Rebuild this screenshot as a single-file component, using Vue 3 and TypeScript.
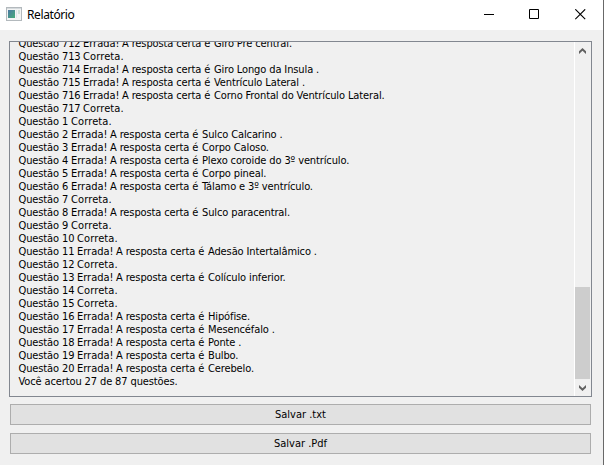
<script setup lang="ts">
interface Row {
  id: string
  answer?: string
}

const rows: Row[] = [
  { id: '712', answer: 'Giro Pre central.' },
  { id: '713' },
  { id: '714', answer: 'Giro Longo da Insula .' },
  { id: '715', answer: 'Ventrículo Lateral .' },
  { id: '716', answer: 'Corno Frontal do Ventrículo Lateral.' },
  { id: '717' },
  { id: '1' },
  { id: '2', answer: 'Sulco Calcarino .' },
  { id: '3', answer: 'Corpo Caloso.' },
  { id: '4', answer: 'Plexo coroide do 3º ventrículo.' },
  { id: '5', answer: 'Corpo pineal.' },
  { id: '6', answer: 'Tálamo e 3º ventrículo.' },
  { id: '7' },
  { id: '8', answer: 'Sulco paracentral.' },
  { id: '9' },
  { id: '10' },
  { id: '11', answer: 'Adesão Intertalâmico .' },
  { id: '12' },
  { id: '13', answer: 'Colículo inferior.' },
  { id: '14' },
  { id: '15' },
  { id: '16', answer: 'Hipófise.' },
  { id: '17', answer: 'Mesencéfalo .' },
  { id: '18', answer: 'Ponte .' },
  { id: '19', answer: 'Bulbo.' },
  { id: '20', answer: 'Cerebelo.' },
]
</script>

<template>
  <div class="window">
    <header class="titlebar">
      <svg class="app-icon" width="16" height="14" viewBox="0 0 16 14">
        <defs>
          <linearGradient id="pane" x1="0" y1="0" x2="1" y2="1">
            <stop offset="0" stop-color="#4c78a4" />
            <stop offset="1" stop-color="#45ad78" />
          </linearGradient>
        </defs>
        <rect x=".5" y=".5" width="15" height="13" fill="#f3f4f4" stroke="#b3b9bd" />
        <rect x="1" y="1" width="14" height="1" fill="#d5dadd" />
        <rect x="2" y="3" width="7" height="8" fill="url(#pane)" />
        <rect x="10" y="3" width="1" height="8" fill="#dfe6ea" />
        <rect x="12" y="3" width="2" height="4" fill="#cfe0d8" />
      </svg>
      <span class="title">Relatório</span>
      <div class="controls">
        <svg width="11" height="11" viewBox="0 0 11 11"><path d="M0 5.5H10" /></svg>
        <svg width="11" height="11" viewBox="0 0 11 11"><path d="M.5 .5H9.5V9.5H.5Z" /></svg>
        <svg class="close" width="11" height="11" viewBox="0 0 11 11"><path d="M.3 .3L10.2 10.2M10.2 .3L.3 10.2" /></svg>
      </div>
    </header>
    <main class="body">
      <div class="report">
        <div class="lines">
          <div v-for="row in rows" :key="row.id" class="line">
            <span class="question" :class="'digits' + row.id.length">Questão {{ row.id }}</span>
            <template v-if="row.answer">
              <span class="wrong">Errada!</span>
              <span class="lead">A resposta certa é</span>
              <span>{{ row.answer }}</span>
            </template>
            <span v-else class="right">Correta.</span>
          </div>
          <div class="line summary">Você acertou 27 de 87 questões.</div>
        </div>
        <div class="scrollbar">
          <svg class="arrow" width="7" height="6" viewBox="0 0 7 6"><path d="M0 3.2L3.5 0L7 3.2V6L3.5 2.8L0 6Z" /></svg>
          <div class="track"><div class="thumb"></div></div>
          <svg class="arrow" width="7" height="6" viewBox="0 0 7 6"><path d="M0 0L3.5 3.2L7 0V2.8L3.5 6L0 2.8Z" /></svg>
        </div>
      </div>
      <button class="save" type="button">Salvar .txt</button>
      <button class="save" type="button">Salvar .Pdf</button>
    </main>
  </div>
</template>

<style>
body {
  overflow: hidden;
}
</style>

<style scoped>
.window {
  box-sizing: border-box;
  width: 604px;
  height: 465px;
  border-right: 1px solid #686868;
  background: #f0f0f0;
  color: #000;
  font-family: "DejaVu Sans Condensed", "DejaVu Sans", sans-serif;
  font-stretch: condensed;
  font-size: 11px;
}
.titlebar {
  display: flex;
  align-items: center;
  height: 30px;
  padding: 0 17px 0 6px;
  box-sizing: border-box;
  background: #fff;
}
.app-icon {
  margin-bottom: 2px;
}
.title {
  margin-left: 5px;
  font-family: "Noto Sans", sans-serif;
  font-size: 12px;
  line-height: 30px;
  letter-spacing: -0.4px;
}
.controls {
  display: flex;
  gap: 34px;
  margin: 0 0 1px auto;
}
.controls path {
  fill: none;
  stroke: #000;
  stroke-width: 1;
}
.controls .close {
  margin-left: 1px;
}
.close path {
  stroke-width: 1.15;
}
.body {
  display: flex;
  flex-direction: column;
  padding: 11px 11px 0 9px;
}
.report {
  display: flex;
  box-sizing: border-box;
  height: 356px;
  margin-bottom: 7px;
  border: 1px solid #828790;
  overflow: hidden;
}
.lines {
  flex: 1;
  min-width: 0;
  margin-top: -5px;
  padding-left: 8.5px;
}
.line {
  display: flex;
  height: 13px;
  line-height: 13px;
  white-space: pre;
  letter-spacing: -0.12px;
}
.question {
  flex: none;
}
.digits1 {
  width: 52.5px;
}
.digits2 {
  width: 58.5px;
}
.digits3 {
  width: 64.5px;
}
.wrong {
  flex: none;
  width: 39px;
  letter-spacing: 0;
}
.right {
  letter-spacing: 0.12px;
}
.lead {
  flex: none;
  width: 92px;
}
.scrollbar {
  display: flex;
  flex-direction: column;
  align-items: center;
  width: 17px;
  padding-right: 1px;
  box-sizing: border-box;
  border-left: 1px solid #fff;
}
.arrow {
  flex: none;
  margin: 6px 0 5px;
  fill: #606060;
}
.track {
  display: flex;
  flex: 1;
  flex-direction: column;
  justify-content: flex-end;
  width: 100%;
}
.thumb {
  height: 92px;
  background: #cdcdcd;
}
.save {
  height: 21px;
  margin: 0 1px 8px 1px;
  padding: 0;
  border: 1px solid #adadad;
  border-radius: 0;
  background: #e1e1e1;
  color: #000;
  font: inherit;
  line-height: 19px;
}
</style>
